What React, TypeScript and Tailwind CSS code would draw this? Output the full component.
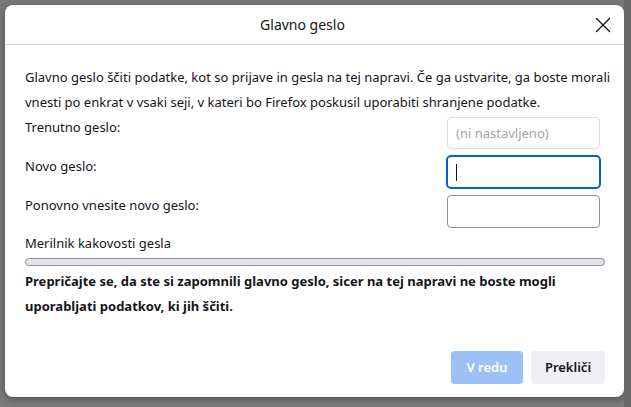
import { X } from "lucide-react";

const font = { fontFamily: '"Noto Sans", "Open Sans", sans-serif' };

function Field({ label, children }: { label: string; children: React.ReactNode }) {
  return (
    <div className="flex items-start justify-between">
      <span className="leading-[20px]">{label}</span>
      {children}
    </div>
  );
}

export default function App() {
  return (
    <div
      className="flex w-[631px] h-[407px] bg-[#7a7a7a] text-[13px] text-[#15141a] overflow-hidden"
      style={font}
    >
      <div className="mt-[5px] ml-[5px] flex h-[392px] w-[619px] flex-col rounded-[8px] bg-white shadow-[0_2px_8px_rgba(0,0,0,0.35)]">
        <div className="relative flex h-[40px] shrink-0 items-center justify-center border-b border-[#d7d7db] pr-[24px]">
          <h1 className="text-[14px]">Glavno geslo</h1>
          <button className="absolute right-[8px] top-[7px] text-[#15141a]">
            <X size={26} strokeWidth={1.2} />
          </button>
        </div>

        <div className="flex flex-1 flex-col pl-[20px] pr-[24px] pt-[20px]">
          <p className="whitespace-nowrap leading-[25px]">
            Glavno geslo ščiti podatke, kot so prijave in gesla na tej napravi. Če ga ustvarite, ga boste morali
            <br />
            vnesti po enkrat v vsaki seji, v kateri bo Firefox poskusil uporabiti shranjene podatke.
          </p>

          <div className="mt-[2px] flex flex-col gap-[7px]">
            <Field label="Trenutno geslo:">
              <input
                disabled
                placeholder="(ni nastavljeno)"
                className="h-[32px] w-[153px] rounded-[4px] border border-[#dcdce0] bg-white px-[8px] placeholder:text-[#a4a4a8]"
              />
            </Field>
            <Field label="Novo geslo:">
              <div className="-mx-px -my-px flex h-[34px] w-[155px] items-center rounded-[5px] border-2 border-[#0061e0] px-[8px]">
                <span className="h-[17px] w-px bg-[#15141a]" />
              </div>
            </Field>
            <Field label="Ponovno vnesite novo geslo:">
              <input
                type="password"
                className="h-[33px] w-[153px] rounded-[4px] border border-[#8f8f9d] bg-white px-[8px]"
              />
            </Field>
          </div>

          <span className="mt-[5px] leading-[20px]">Merilnik kakovosti gesla</span>
          <div className="mt-[5px] h-[8px] w-[580px] rounded-full border border-[#8f8f9d] bg-[#e3e3e8]" />

          <p className="mt-[3px] font-bold leading-[25px]">
            Prepričajte se, da ste si zapomnili glavno geslo, sicer na tej napravi ne boste mogli
            <br />
            uporabljati podatkov, ki jih ščiti.
          </p>

          <div className="mt-auto mb-[13px] flex justify-end gap-[8px]">
            <button className="h-[33px] w-[72px] rounded-[4px] bg-[#9dc1f4] font-semibold text-white">
              V redu
            </button>
            <button className="-mr-[5px] h-[33px] w-[74px] rounded-[4px] bg-[#f0f0f4] font-semibold">
              Prekliči
            </button>
          </div>
        </div>
      </div>
      <div className="flex-1 bg-[#6a6a6a]" />
    </div>
  );
}
